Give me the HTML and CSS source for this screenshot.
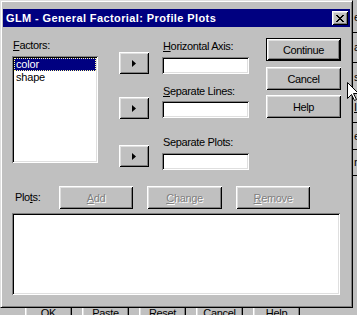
FILE: index.html
```html
<!DOCTYPE html>
<html>
<head>
<meta charset="utf-8">
<title>GLM - General Factorial: Profile Plots</title>
<link rel="stylesheet" href="styles.css">
</head>
<body>
<div class="desktop">
  <div class="parent-strip">
    <div class="strip-row r30">e</div>
    <div class="strip-row r30">a</div>
    <div class="strip-row r30">s</div>
    <div class="strip-row r30"><u>I</u></div>
    <div class="strip-row r27">e</div>
    <div class="strip-row r26">r</div>
  </div>
  <div class="parent-buttons">
    <div class="pbtn">OK</div>
    <div class="pbtn">Paste</div>
    <div class="pbtn">Reset</div>
    <div class="pbtn">Cancel</div>
    <div class="pbtn">Help</div>
  </div>

  <div class="dialog">
    <div class="titlebar">
      <span class="title">GLM - General Factorial: Profile Plots</span>
      <div class="close">
        <svg width="8" height="7" viewBox="0 0 8 7"><path d="M0 0h2v1H0z M6 0h2v1H6z M1 1h2v1H1z M5 1h2v1H5z M2 2h4v1H2z M3 3h2v1H3z M2 4h4v1H2z M1 5h2v1H1z M5 5h2v1H5z M0 6h2v1H0z M6 6h2v1H6z" fill="#000"/></svg>
      </div>
    </div>
    <div class="content">
      <div class="top">
        <div class="col-factors">
          <div class="label lbl-factors"><u>F</u>actors:</div>
          <div class="sunken factors-list">
            <div class="item selected">color</div>
            <div class="item">shape</div>
          </div>
        </div>
        <div class="col-arrows">
          <div class="btn arrow arrow1"><svg width="4" height="7" viewBox="0 0 4 7"><path d="M0 0L4 3.5L0 7z" fill="#000"/></svg></div>
          <div class="btn arrow arrow2"><svg width="4" height="7" viewBox="0 0 4 7"><path d="M0 0L4 3.5L0 7z" fill="#000"/></svg></div>
          <div class="btn arrow arrow3"><svg width="4" height="7" viewBox="0 0 4 7"><path d="M0 0L4 3.5L0 7z" fill="#000"/></svg></div>
        </div>
        <div class="col-fields">
          <div class="label lbl1"><u>H</u>orizontal Axis:</div>
          <div class="sunken field field1"></div>
          <div class="label lbl2"><u>S</u>eparate Lines:</div>
          <div class="sunken field field2"></div>
          <div class="label lbl3">Separate Plots:</div>
          <div class="sunken field field3"></div>
        </div>
        <div class="col-buttons">
          <div class="btn default btn-continue">Continue</div>
          <div class="btn btn-cancel">Cancel</div>
          <div class="btn btn-help">Help</div>
        </div>
      </div>
      <div class="plots-row">
        <div class="label lbl-plots">Plo<u>t</u>s:</div>
        <div class="btn disabled btn-add"><u>A</u>dd</div>
        <div class="btn disabled btn-change"><u>C</u>hange</div>
        <div class="btn disabled btn-remove"><u>R</u>emove</div>
      </div>
      <div class="sunken plots-list"></div>
    </div>
  </div>

  <svg class="cursor" width="12" height="19" viewBox="0 0 12 19"><path d="M0.5 0.5V16.5L4.5 12.5L7.5 18.5L9.5 17.5L6.5 11.5H11.5Z" fill="#fff" stroke="#000" stroke-width="1"/></svg>
</div>
</body>
</html>
```

FILE: styles.css
```css
html, body {
  margin: 0;
  padding: 0;
}
body {
  background: #c0c0c0;
  font-family: "Liberation Sans", Arial, sans-serif;
  font-size: 11px;
  color: #000;
}
.desktop {
  position: relative;
  width: 357px;
  height: 315px;
  overflow: hidden;
  background: #c0c0c0;
}

/* background (parent) window pieces */
.parent-strip {
  position: absolute;
  left: 353px;
  top: 3px;
  width: 12px;
  display: flex;
  flex-direction: column;
}
.strip-row {
  box-sizing: border-box;
  border-bottom: 1px solid #000;
  display: flex;
  align-items: center;
  padding-left: 1px;
  line-height: 13px;
}
.r30 { height: 30px; }
.r27 { height: 27px; }
.r26 { height: 26px; }

.parent-buttons {
  position: absolute;
  left: 25px;
  top: 301px;
  display: flex;
  gap: 10px;
}
.pbtn {
  width: 47px;
  height: 23px;
  display: flex;
  align-items: center;
  justify-content: center;
  box-shadow: inset 1px 1px #fff, inset -1px -1px #000, inset 2px 2px #dfdfdf, inset -2px -2px #808080;
  letter-spacing: -0.3px;
}

/* dialog */
.dialog {
  position: absolute;
  left: 0;
  top: 0;
  width: 353px;
  height: 308px;
  box-sizing: border-box;
  background: #c0c0c0;
  border-top: 1px solid #dfdfdf;
  border-left: 1px solid #dfdfdf;
  border-right: 1px solid #000;
  border-bottom: 1px solid #000;
  box-shadow: inset 1px 1px #fff, inset -1px -1px #808080;
  padding: 2px;
  display: flex;
  flex-direction: column;
}
.titlebar {
  margin-top: 6px;
  height: 18px;
  flex: none;
  background: #000080;
  display: flex;
  align-items: center;
  justify-content: space-between;
  padding: 0 2px 0 3px;
}
.title {
  color: #fff;
  font-weight: bold;
  font-size: 11px;
  letter-spacing: 0.4px;
  white-space: nowrap;
}
.close {
  width: 16px;
  height: 14px;
  background: #c0c0c0;
  box-shadow: inset 1px 1px #fff, inset -1px -1px #000, inset 2px 2px #dfdfdf, inset -2px -2px #808080;
  display: flex;
  align-items: center;
  justify-content: center;
}
.close svg { display: block; margin-left: -1px; }

.content {
  display: flex;
  flex-direction: column;
}
.label {
  line-height: 13px;
  height: 13px;
  letter-spacing: -0.35px;
  white-space: nowrap;
}
.label u, .btn u { text-underline-offset: 1px; }

.top {
  display: flex;
  align-items: flex-start;
  height: 159px;
}

/* bevels */
.btn {
  box-sizing: border-box;
  background: #c0c0c0;
  box-shadow: inset 1px 1px #fff, inset -1px -1px #000, inset 2px 2px #dfdfdf, inset -2px -2px #808080;
  display: flex;
  align-items: center;
  justify-content: center;
  letter-spacing: -0.35px;
  white-space: nowrap;
}
.btn.default {
  border: 1px solid #000;
}
.btn.disabled {
  color: #808080;
  text-shadow: 1px 1px 0 #fff;
}
.sunken {
  box-sizing: border-box;
  background: #fff;
  box-shadow: inset 1px 1px #808080, inset -1px -1px #fff, inset 2px 2px #000, inset -2px -2px #dfdfdf;
}

/* factors column */
.col-factors {
  margin-left: 9px;
  width: 86px;
  display: flex;
  flex-direction: column;
}
.lbl-factors {
  margin-top: 12px;
  padding-left: 1px;
}
.factors-list {
  margin-top: 4px;
  height: 107px;
  padding: 2px 2px;
}
.item {
  height: 13px;
  line-height: 13px;
  padding-left: 2px;
  box-sizing: border-box;
  letter-spacing: -0.2px;
}
.item.selected {
  background: #000080;
  color: #fff;
  outline: 1px dotted #ffffa0;
  outline-offset: -1px;
}

/* arrows column */
.col-arrows {
  margin-left: 21px;
  width: 30px;
  display: flex;
  flex-direction: column;
}
.arrow {
  height: 22px;
}
.arrow svg { display: block; }
.arrow1 { margin-top: 25px; }
.arrow2 { margin-top: 23px; }
.arrow3 { margin-top: 26px; }

/* fields column */
.col-fields {
  margin-left: 13px;
  width: 87px;
  display: flex;
  flex-direction: column;
}
.col-fields .label { padding-left: 1px; }
.field { height: 17px; }
.lbl1 { margin-top: 13px; }
.field1 { margin-top: 4px; }
.lbl2 { margin-top: 11px; }
.field2 { margin-top: 3px; }
.lbl3 { margin-top: 18px; }
.field3 { margin-top: 4px; }

/* buttons column */
.col-buttons {
  margin-left: 17px;
  width: 75px;
  display: flex;
  flex-direction: column;
}
.col-buttons .btn { height: 23px; }
.btn-continue { margin-top: 11px; }
.btn-cancel { margin-top: 6px; }
.btn-help { margin-top: 5px; }

/* plots row */
.plots-row {
  display: flex;
  align-items: center;
  height: 23px;
}
.lbl-plots {
  margin-left: 12px;
  width: 44px;
}
.plots-row .btn { height: 23px; }
.btn-add { width: 74px; }
.btn-change { width: 75px; margin-left: 14px; }
.btn-remove { width: 74px; margin-left: 14px; }

.plots-list {
  margin-top: 4px;
  margin-left: 9px;
  width: 328px;
  height: 82px;
}

.cursor {
  position: absolute;
  left: 347px;
  top: 82px;
}
```
